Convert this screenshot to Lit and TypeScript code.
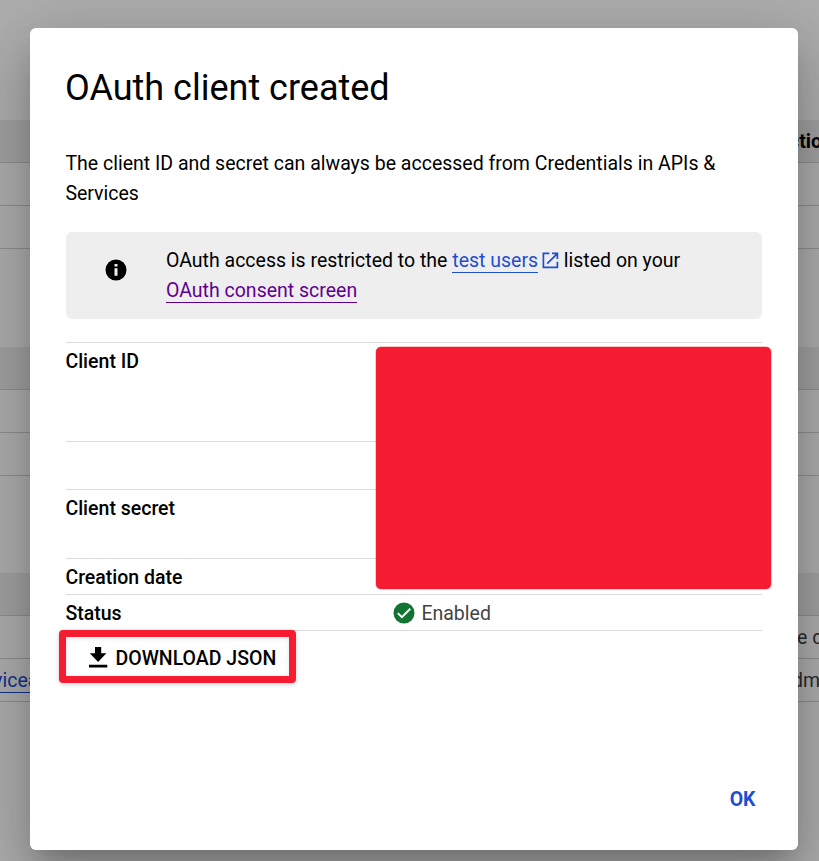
import { LitElement, html, css } from "lit";
import { customElement } from "lit/decorators.js";

@customElement("page-backdrop")
class PageBackdrop extends LitElement {
  static styles = css`
    :host {
      display: block;
      height: 100%;
      padding-top: 120px;
      box-sizing: border-box;
      background: #fff;
      font: 400 19.5px/44px Roboto, sans-serif;
      color: #3c4043;
    }
    .table { margin-bottom: 98px; }
    .table.middle { margin-bottom: 97px; }
    .row {
      display: flex;
      justify-content: space-between;
      height: 42px;
      border-bottom: 1px solid #d2d2d2;
      white-space: nowrap;
      overflow: hidden;
    }
    .head { background: #eee; color: #000; font-weight: 700; }
    .left { width: 60px; display: flex; }
    .right { width: 26px; }
    .link {
      color: #1a4bd0;
      height: 33px;
      margin-left: -7px;
      border-bottom: 1px solid #1a4bd0;
    }
    .role { margin-left: -1px; }
    .role.viewer { margin-left: 4px; }
    .act { margin-left: -4px; }
  `;
  render() {
    return html`
      <div class="table">
        <div class="row head"><span></span><span class="right"><span class="act">ctions</span></span></div>
        <div class="row"></div>
        <div class="row"></div>
      </div>
      <div class="table middle">
        <div class="row head"></div>
        <div class="row"></div>
        <div class="row"></div>
      </div>
      <div class="table">
        <div class="row head"></div>
        <div class="row"><span></span><span class="right"><span class="role viewer">e d</span></span></div>
        <div class="row">
          <span class="left"><span class="link">vicea</span></span>
          <span class="right"><span class="role">dmin</span></span>
        </div>
      </div>
    `;
  }
}

@customElement("client-dialog")
class ClientDialog extends LitElement {
  static styles = css`
    :host {
      display: flex;
      flex-direction: column;
      box-sizing: border-box;
      width: 768px;
      height: 822px;
      padding: 36px;
      border-radius: 6px;
      background: #fff;
      color: #000;
      font: 400 19.5px/30px Roboto, sans-serif;
      box-shadow:
        0 16px 22px -10px rgba(0, 0, 0, 0.2),
        0 36px 57px 4px rgba(0, 0, 0, 0.14),
        0 14px 69px 12px rgba(0, 0, 0, 0.12);
    }
    h1 { margin: 0 0 0 -1px; font-size: 36px; font-weight: 400; line-height: 48px; }
    p { margin: 37px 0 23px -0.6px; }
    .notice {
      display: flex;
      align-items: flex-start;
      box-sizing: border-box;
      height: 87px;
      padding: 14px 0 0 38px;
      border-radius: 6px;
      background: #eee;
    }
    .info { width: 24px; height: 24px; margin: 12px 38px 0 0; flex: none; }
    a { color: #1f4fd0; display: inline-block; line-height: 22px; border-bottom: 1px solid; }
    a.seen { color: #61008f; }
    .ext { width: 21px; height: 21px; vertical-align: -4px; margin: 0 -2.5px 0 -2.5px; }
    .details { margin-top: 23px; position: relative; border-bottom: 1px solid #dadada; }
    .item {
      display: flex;
      box-sizing: border-box;
      height: 36px;
      padding-top: 4px;
      border-top: 1px solid #dadada;
    }
    .item.id { height: 99px; }
    .item.gap { height: 48px; }
    .item.secret { height: 69px; }
    .name { width: 326px; margin-left: -0.6px; font-weight: 500; }
    .state { display: flex; gap: 5.5px; height: 30px; color: #444; }
    .state svg { width: 24px; height: 24px; margin: 2px 0 0 0.5px; }
    .mask {
      position: absolute;
      left: 310px;
      top: 5px;
      width: 395px;
      height: 242px;
      border-radius: 5px;
      background: #f51b31;
      box-shadow: 0 0 0 0.5px #f51b3180;
    }
    .download {
      display: flex;
      align-items: center;
      box-sizing: border-box;
      position: relative;
      width: 237px;
      height: 53px;
      margin: -1px 0 0 -7px;
      padding-left: 18px;
      border: 7px solid #f51b31;
      border-radius: 4px;
      box-shadow: 0 1px 5px rgba(0, 0, 0, 0.2), inset 0 1px 5px rgba(0, 0, 0, 0.12);
      font-weight: 500;
      white-space: nowrap;
    }
    .download svg { width: 26px; height: 26px; margin: 1px 5px 0 0.5px; flex: none; }
    .download span { padding-top: 5px; }
    .ok { margin: auto 6.5px -1px auto; color: #1f4fd0; font-weight: 700; }
  `;
  render() {
    return html`
      <h1>OAuth client created</h1>
      <p>The client ID and secret can always be accessed from Credentials in APIs &amp; Services</p>
      <div class="notice">
        <svg class="info" viewBox="0 0 24 24">
          <circle cx="12" cy="12" r="10.5" />
          <path fill="#eee" d="M10.5 6h3v2.6h-3zM10.5 10.2h3v7.5h-3z" />
        </svg>
        <div>
          OAuth access is restricted to the <a>test users</a>
          <svg class="ext" viewBox="0 0 21 21" fill="none" stroke="#1f4fd0" stroke-width="1.7">
            <path d="M9.3 3.4H3.4v14h14v-5.6M12 3.4h5.4V9M17 3.8L7.2 13.6" />
          </svg>
          listed on your<br /><a class="seen">OAuth consent screen</a>
        </div>
      </div>
      <div class="details">
        <div class="item id"><span class="name">Client ID</span></div>
        <div class="item gap"></div>
        <div class="item secret"><span class="name">Client secret</span></div>
        <div class="item"><span class="name">Creation date</span></div>
        <div class="item">
          <span class="name">Status</span>
          <span class="state">
            <svg viewBox="0 0 24 24">
              <circle cx="12" cy="12" r="10.5" fill="#137333" />
              <path d="M5.8 12.1l4.1 4.1 8.4-8.4" fill="none" stroke="#fff" stroke-width="2" />
            </svg>
            Enabled
          </span>
        </div>
        <div class="mask"></div>
      </div>
      <div class="download">
        <svg viewBox="0 0 26 26">
          <path d="M10 3h6.2v6.2h5.2L13.1 18 4.8 9.2H10zM4 20.8h18.3v2.8H4z" />
        </svg>
        <span>DOWNLOAD JSON</span>
      </div>
      <div class="ok">OK</div>
    `;
  }
}

@customElement("app-root")
class AppRoot extends LitElement {
  static styles = css`
    :host {
      display: grid;
      width: 819px;
      height: 861px;
      overflow: hidden;
    }
    .page, .scrim { grid-area: 1 / 1; min-width: 0; height: 861px; }
    .scrim {
      z-index: 1;
      box-sizing: border-box;
      padding: 28px 0 0 30px;
      background: rgba(0, 0, 0, 0.32);
      overflow: hidden;
    }
  `;
  render() {
    return html`
      <page-backdrop class="page"></page-backdrop>
      <div class="scrim"><client-dialog></client-dialog></div>
    `;
  }
}
